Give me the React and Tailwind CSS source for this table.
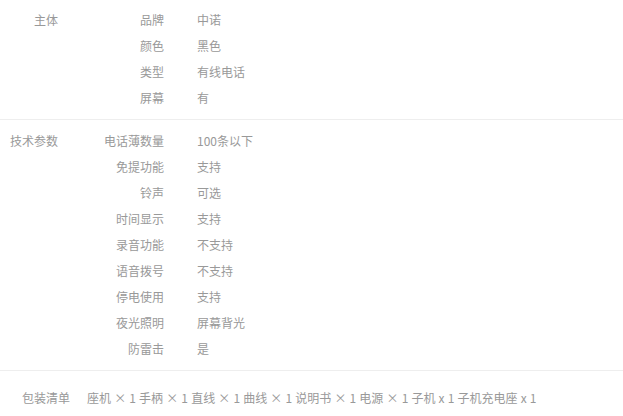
const groups = [
  {
    title: '主体',
    rows: [
      ['品牌', '中诺'],
      ['颜色', '黑色'],
      ['类型', '有线电话'],
      ['屏幕', '有'],
    ],
  },
  {
    title: '技术参数',
    rows: [
      ['电话薄数量', '100条以下'],
      ['免提功能', '支持'],
      ['铃声', '可选'],
      ['时间显示', '支持'],
      ['录音功能', '不支持'],
      ['语音拨号', '不支持'],
      ['停电使用', '支持'],
      ['夜光照明', '屏幕背光'],
      ['防雷击', '是'],
    ],
  },
];

const App = () => {
  return (
    <div
      className="w-[623px] h-[416px] bg-white text-[12px] text-[#999] overflow-hidden"
      style={{ fontFamily: '"Noto Sans CJK SC", "Microsoft YaHei", sans-serif' }}
    >
      {groups.map((g, i) => (
        <div
          key={g.title}
          className={`flex border-b border-[#eee] pb-2 ${i === 0 ? 'pt-[7px]' : 'pt-2'}`}
        >
          <div className="w-[58px] shrink-0 text-right leading-[26px]">{g.title}</div>
          <dl className="flex flex-col">
            {g.rows.map(([k, v]) => (
              <div key={k} className="flex leading-[26px]">
                <dt className="w-[106px] text-right">{k}</dt>
                <dd className="ml-[33px]">{v}</dd>
              </div>
            ))}
          </dl>
        </div>
      ))}
      <div className="flex pt-[14px] leading-[26px]">
        <div className="pl-[22px] w-[87px] shrink-0">包装清单</div>
        <div className="[word-spacing:0.45px]">座机 × 1 手柄 × 1 直线 × 1 曲线 × 1 说明书 × 1 电源 × 1 子机 x 1 子机充电座 x 1</div>
      </div>
    </div>
  );
};

export default App;
